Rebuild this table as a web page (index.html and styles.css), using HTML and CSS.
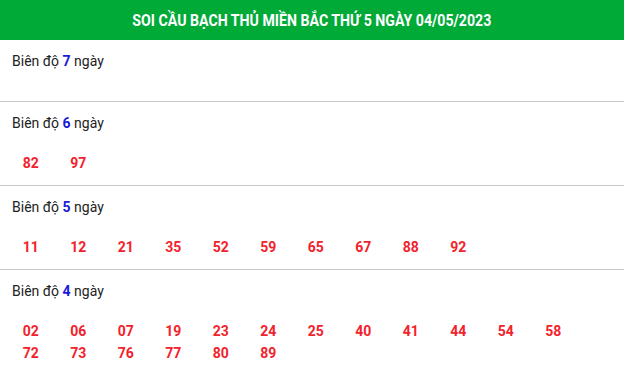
FILE: index.html
```html
<!DOCTYPE html>
<html lang="vi">
<head>
<meta charset="utf-8">
<link rel="stylesheet" href="styles.css">
</head>
<body>
<div class="box">
  <div class="head"><span class="head-text">SOI CẦU BẠCH THỦ MIỀN BẮC THỨ 5 NGÀY 04/05/2023</span></div>
  <div class="sec">
    <div class="title">Biên độ <b>7</b> ngày</div>
    <div class="nums"></div>
  </div>
  <div class="sec">
    <div class="title">Biên độ <b>6</b> ngày</div>
    <div class="nums"><span>82</span><span>97</span></div>
  </div>
  <div class="sec">
    <div class="title">Biên độ <b>5</b> ngày</div>
    <div class="nums"><span>11</span><span>12</span><span>21</span><span>35</span><span>52</span><span>59</span><span>65</span><span>67</span><span>88</span><span>92</span></div>
  </div>
  <div class="sec last">
    <div class="title">Biên độ <b>4</b> ngày</div>
    <div class="nums"><span>02</span><span>06</span><span>07</span><span>19</span><span>23</span><span>24</span><span>25</span><span>40</span><span>41</span><span>44</span><span>54</span><span>58</span><span>72</span><span>73</span><span>76</span><span>77</span><span>80</span><span>89</span></div>
  </div>
</div>
</body>
</html>
```
FILE: styles.css
```css
* { box-sizing: border-box; }
html, body { margin: 0; padding: 0; background: #fff; }
body { font-family: Roboto, "Liberation Sans", sans-serif; color: #222; }
.box { width: 624px; }
.head {
  height: 40px;
  background: #00aa37;
  color: #fff;
  display: flex;
  align-items: center;
  justify-content: center;
  overflow: hidden;
}
.head-text {
  display: inline-block;
  font-weight: 700;
  font-size: 16px;
  white-space: nowrap;
  transform: scaleX(0.885);
}
.sec { border-bottom: 1px solid #c8c8c8; }
.sec.last { border-bottom: none; }
.title {
  padding: 10px 12px 0;
  font-size: 14px;
  line-height: 22px;
}
.title b { color: #1a1ad6; font-weight: 700; }
.nums {
  padding: 18px 7px 11px;
  display: flex;
  flex-wrap: wrap;
  min-height: 29px;
}
.nums span {
  width: 47.5px;
  text-align: center;
  color: #f2222c;
  font-weight: 700;
  font-size: 14px;
  line-height: 22px;
}
```
